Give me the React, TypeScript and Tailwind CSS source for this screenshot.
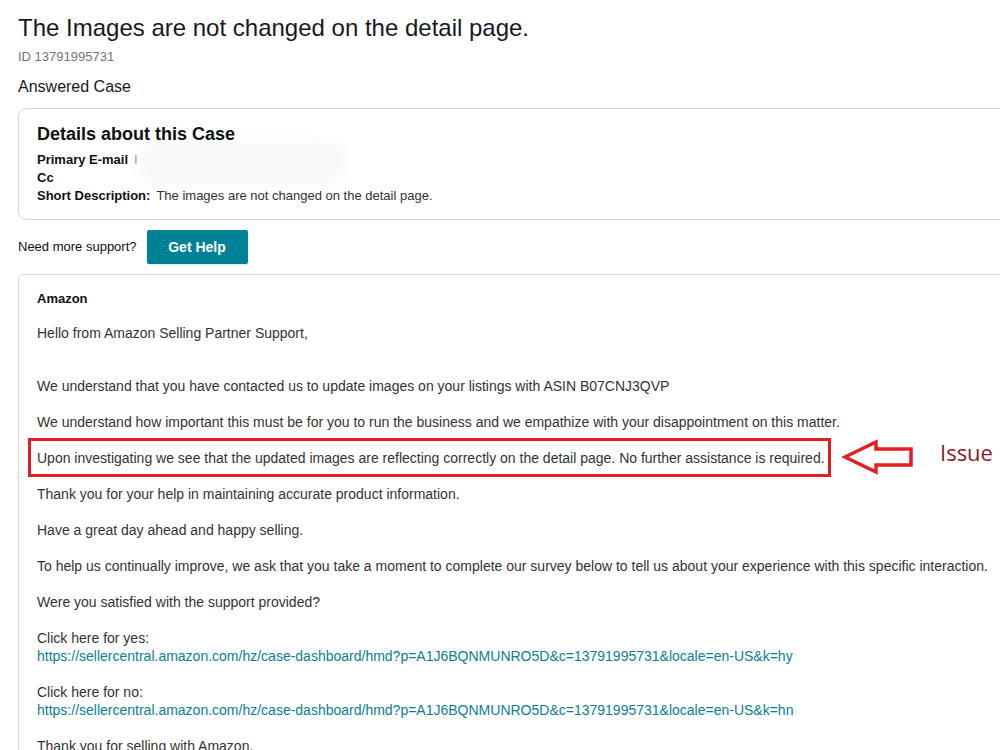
export default function App() {
  const paras = [
    "Thank you for your help in maintaining accurate product information.",
    "Have a great day ahead and happy selling.",
    "To help us continually improve, we ask that you take a moment to complete our survey below to tell us about your experience with this specific interaction.",
    "Were you satisfied with the support provided?",
  ];
  return (
    <div className="h-[750px] w-[1000px] overflow-hidden bg-white font-['Liberation_Sans',Arial,sans-serif] text-[#333]">
      <div className="w-[1100px] pl-[18px] pt-[12px]">
        <h1 className="text-[24px] leading-8 text-[#16191f]">The Images are not changed on the detail page.</h1>
        <div className="mt-1 text-[13px] leading-[18px] text-[#767676]">ID 13791995731</div>
        <div className="mt-[10px] text-[16px] leading-[22px] text-[#16191f]">Answered Case</div>

        {/* Case details */}
        <div className="relative mt-[10px] rounded-lg border border-[#d5d9d9] px-[18px] pb-[14px] pt-[13px]">
          <div className="absolute left-[118px] top-[32px] h-[44px] w-[210px] rounded-full bg-[#f9f9f9] blur-[6px]" />
          <div className="relative">
            <h2 className="text-[18px] font-bold leading-6 text-[#0f1111]">Details about this Case</h2>
            <div className="mt-[5px] text-[13px] leading-[18px] text-[#0f1111]">
              <div>
                <span className="font-bold">Primary E-mail</span>
                <span className="ml-[6px] text-[#999]">I</span>
              </div>
              <div className="font-bold">Cc</div>
              <div>
                <span className="font-bold">Short Description:</span>
                <span className="ml-[6px] text-[#333]">The images are not changed on the detail page.</span>
              </div>
            </div>
          </div>
        </div>

        <div className="mt-[10px] flex items-center gap-[10px]">
          <span className="text-[13px] text-[#0f1111]">Need more support?</span>
          <button className="h-[34px] w-[101px] rounded-[2px] bg-[#008296] text-[14px] font-bold text-white shadow-sm">
            Get Help
          </button>
        </div>

        {/* Correspondence */}
        <div className="mt-[10px] rounded-tl-md border border-[#d5d9d9] px-[18px] pb-10 pt-[15px] text-[14px] leading-[18px]">
          <div className="text-[13px] font-bold text-[#0f1111]">Amazon</div>
          <p className="mt-[16px]">Hello from Amazon Selling Partner Support,</p>
          <p className="mt-[35px]">We understand that you have contacted us to update images on your listings with ASIN B07CNJ3QVP</p>
          <p className="mt-[18px]">We understand how important this must be for you to run the business and we empathize with your disappointment on this matter.</p>
          <p className="relative mt-[18px]">
            Upon investigating we see that the updated images are reflecting correctly on the detail page. No further assistance is required.
            <span className="absolute left-[-9px] top-[-11px] h-[39px] w-[803px] border-[3px] border-[#e31e24]" />
            <svg className="absolute left-[805px] top-[-10px]" width="72" height="36" viewBox="0 0 72 36">
              <path
                d="M3 18 L34 3 L34 10 L69 10 L69 26 L34 26 L34 33 Z"
                fill="none"
                stroke="#e31e24"
                strokeWidth="3.5"
                strokeLinejoin="miter"
              />
            </svg>
            <span className="absolute left-[903px] top-[-12px] font-['Open_Sans',sans-serif] text-[22px] leading-[30px] text-[#8b1a2b]">
              Issue
            </span>
          </p>
          {paras.map((t) => (
            <p key={t} className="mt-[18px]">{t}</p>
          ))}
          <p className="mt-[18px]">
            Click here for yes:
            <br />
            <a className="text-[#0a7f91]">https://sellercentral.amazon.com/hz/case-dashboard/hmd?p=A1J6BQNMUNRO5D&amp;c=13791995731&amp;locale=en-US&amp;k=hy</a>
          </p>
          <p className="mt-[18px]">
            Click here for no:
            <br />
            <a className="text-[#0a7f91]">https://sellercentral.amazon.com/hz/case-dashboard/hmd?p=A1J6BQNMUNRO5D&amp;c=13791995731&amp;locale=en-US&amp;k=hn</a>
          </p>
          <p className="mt-[18px]">Thank you for selling with Amazon.</p>
        </div>
      </div>
    </div>
  );
}
